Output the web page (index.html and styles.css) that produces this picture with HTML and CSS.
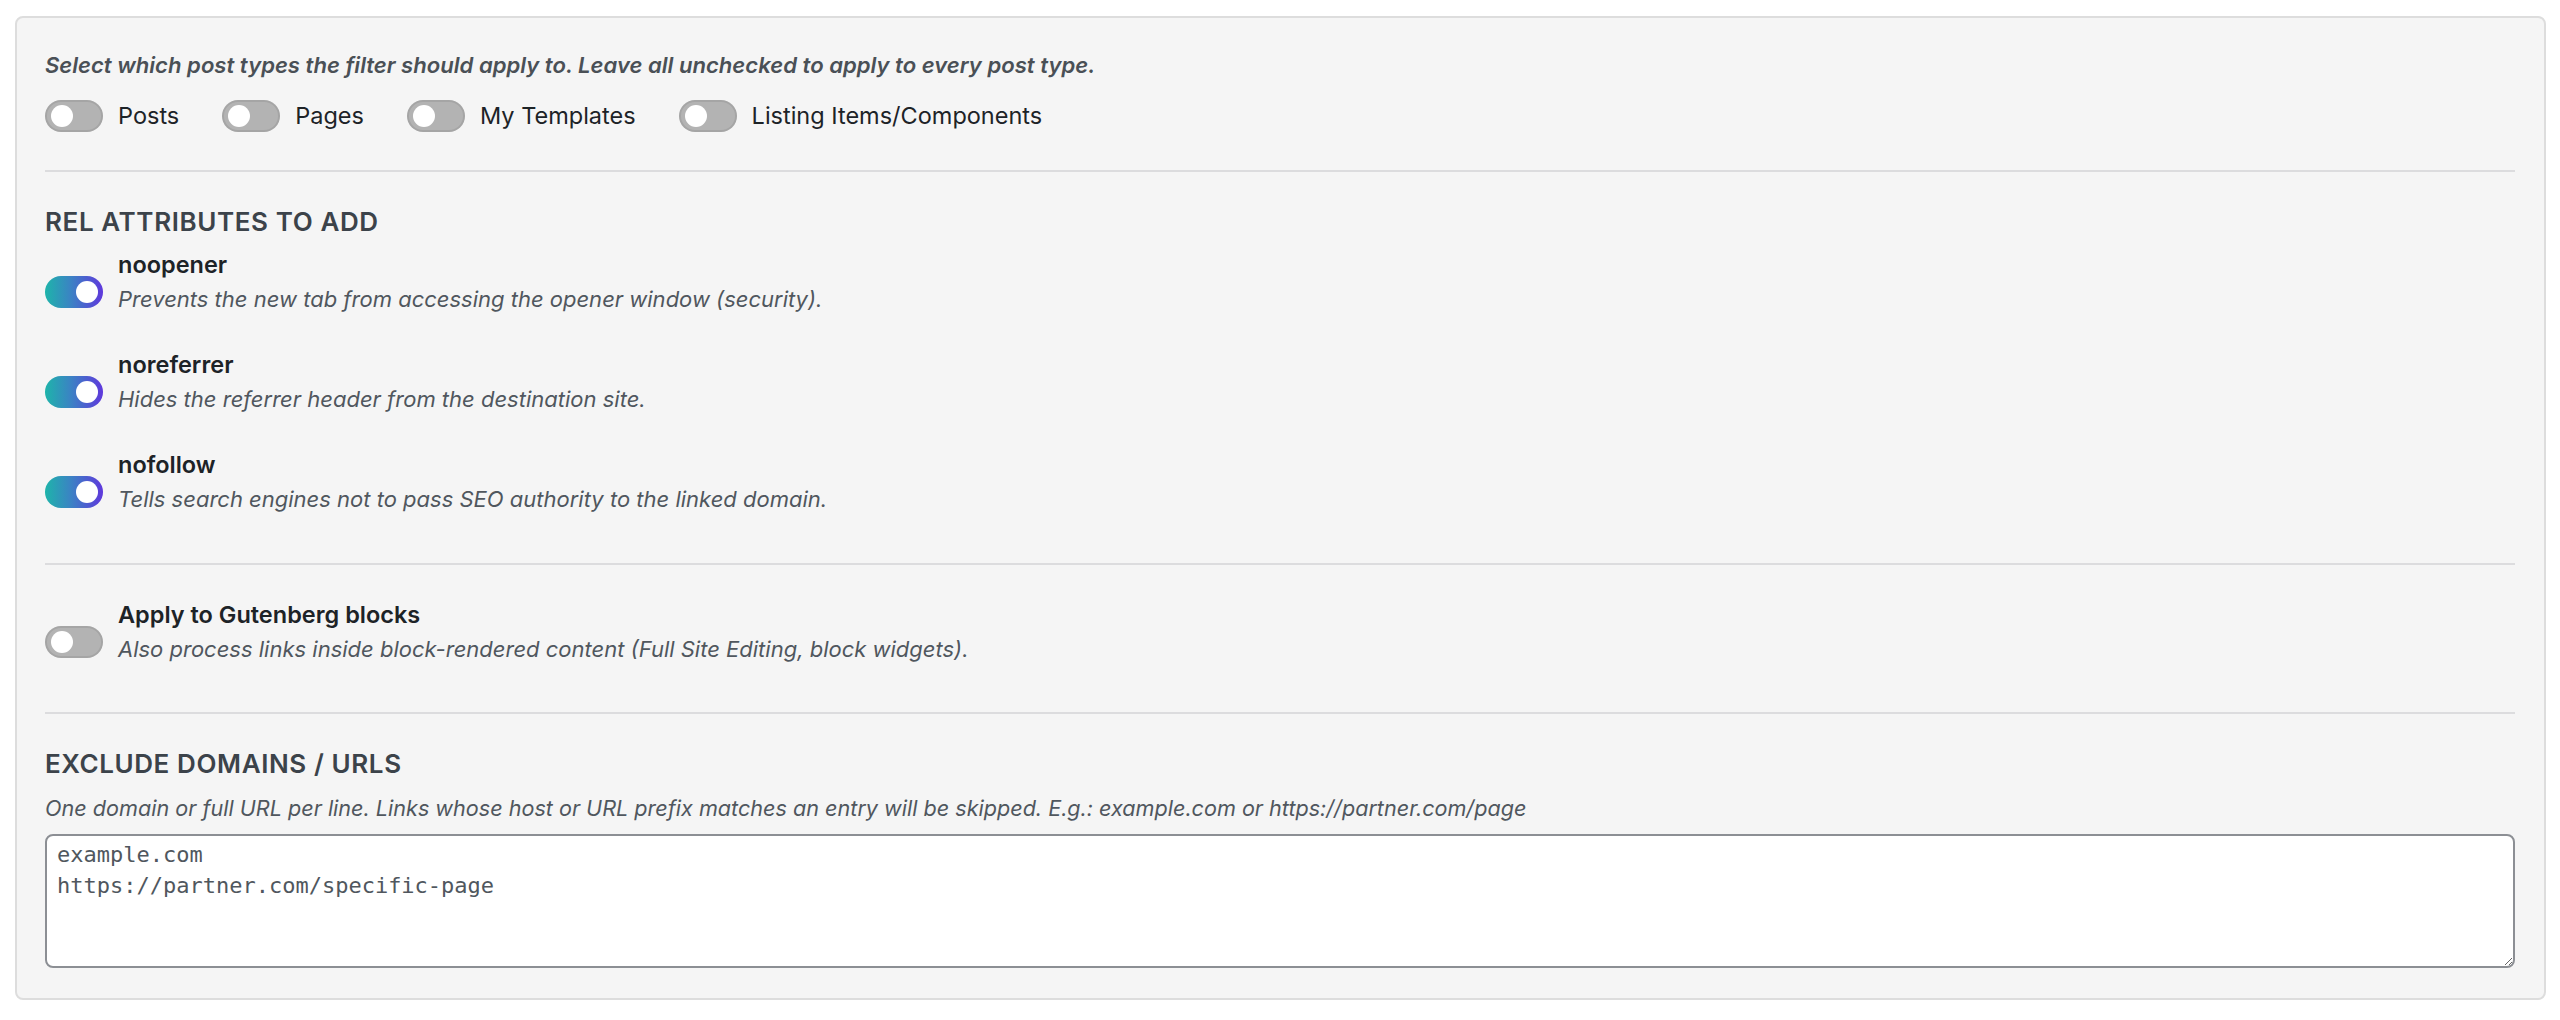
FILE: index.html
```html
<!DOCTYPE html>
<html lang="en">
<head>
<meta charset="utf-8">
<title>Link settings</title>
<link rel="stylesheet" href="styles.css">
</head>
<body>
<div class="panel">
  <section class="section first">
    <p class="desc lead">Select which post types the filter should apply to. Leave all unchecked to apply to every post type.</p>
    <div class="types">
      <label class="type"><span class="toggle"><span class="knob"></span></span><span class="type-label">Posts</span></label>
      <label class="type"><span class="toggle"><span class="knob"></span></span><span class="type-label">Pages</span></label>
      <label class="type"><span class="toggle"><span class="knob"></span></span><span class="type-label">My Templates</span></label>
      <label class="type"><span class="toggle"><span class="knob"></span></span><span class="type-label">Listing Items/Components</span></label>
    </div>
  </section>
  <hr class="sep">
  <section class="section">
    <h3 class="heading">REL ATTRIBUTES TO ADD</h3>
    <div class="opts">
      <div class="opt">
        <span class="toggle on"><span class="knob"></span></span>
        <div class="opt-text">
          <div class="opt-label">noopener</div>
          <div class="desc">Prevents the new tab from accessing the opener window (security).</div>
        </div>
      </div>
      <div class="opt">
        <span class="toggle on"><span class="knob"></span></span>
        <div class="opt-text">
          <div class="opt-label">noreferrer</div>
          <div class="desc">Hides the referrer header from the destination site.</div>
        </div>
      </div>
      <div class="opt">
        <span class="toggle on"><span class="knob"></span></span>
        <div class="opt-text">
          <div class="opt-label">nofollow</div>
          <div class="desc">Tells search engines not to pass SEO authority to the linked domain.</div>
        </div>
      </div>
    </div>
  </section>
  <hr class="sep sep2">
  <section class="section">
    <div class="opt single">
      <span class="toggle"><span class="knob"></span></span>
      <div class="opt-text">
        <div class="opt-label">Apply to Gutenberg blocks</div>
        <div class="desc">Also process links inside block-rendered content (Full Site Editing, block widgets).</div>
      </div>
    </div>
  </section>
  <hr class="sep sep3">
  <section class="section">
    <h3 class="heading">EXCLUDE DOMAINS / URLS</h3>
    <p class="desc exclude-desc">One domain or full URL per line. Links whose host or URL prefix matches an entry will be skipped. E.g.: example.com or https://partner.com/page</p>
    <textarea class="domains" spellcheck="false">example.com
https://partner.com/specific-page</textarea>
  </section>
</div>
</body>
</html>
```
FILE: styles.css
```css
html, body {
  margin: 0;
  padding: 0;
  background: #ffffff;
}
body {
  font-family: Inter, "Noto Sans", "Liberation Sans", sans-serif;
  color: #1d2327;
}
.panel {
  margin: 16px 14px 20px 15px;
  border: 2px solid #dddddd;
  border-radius: 8px;
  background: #f5f5f5;
  padding: 31px 29px 30px 28px;
  box-sizing: border-box;
  height: 984px;
}
.section {
  margin: 0;
}
.desc {
  margin: 0;
  font-size: 22px;
  line-height: 32px;
  font-style: italic;
  color: #50575e;
}
.lead {
  font-size: 22.1px;
  font-weight: 600;
  color: #4a5056;
}
.types {
  display: flex;
  align-items: center;
  gap: 43px;
  margin-top: 19px;
}
.type {
  display: flex;
  align-items: center;
  gap: 15px;
}
.type-label {
  font-size: 23.5px;
  line-height: 32px;
  color: #1d2327;
}
.toggle {
  position: relative;
  display: block;
  flex: none;
  width: 58px;
  height: 32px;
  border-radius: 16px;
  background: #b3b3b3;
  box-shadow: inset 0 0 0 2px rgba(0, 0, 0, 0.08);
}
.toggle .knob {
  position: absolute;
  top: 5px;
  left: 6px;
  width: 22px;
  height: 22px;
  border-radius: 50%;
  background: #ffffff;
}
.toggle.on {
  background: linear-gradient(90deg, #1eb4aa 0%, #3b82c4 45%, #5f38dc 100%);
  box-shadow: none;
}
.toggle.on .knob {
  left: 31px;
}
.sep {
  border: 0;
  height: 2px;
  background: #dcdcde;
  margin: 38px 0 0 0;
}
.sep2 {
  margin-top: 49px;
}
.sep3 {
  margin-top: 48px;
}
.heading {
  margin: 34px 0 0 0;
  font-size: 26px;
  line-height: 32px;
  font-weight: 600;
  letter-spacing: 0.6px;
  color: #3c434a;
}
.opts {
  display: flex;
  flex-direction: column;
  gap: 33px;
  margin-top: 9px;
}
.opt {
  display: flex;
  align-items: flex-start;
  gap: 15px;
}
.opt .toggle {
  margin-top: 29px;
}
.single {
  margin-top: 32px;
}
.opt-label {
  font-size: 23.5px;
  line-height: 35px;
  font-weight: 600;
  color: #1d2327;
}
.opt-text .desc {
  position: relative;
  top: 1px;
}
.exclude-desc {
  margin-top: 12px;
  font-size: 21.6px;
}
.domains {
  display: block;
  box-sizing: border-box;
  width: 100%;
  height: 134px;
  margin-top: 10px;
  padding: 3px 10px;
  border: 2px solid #8c8f94;
  border-radius: 8px;
  background: #ffffff;
  font-family: "DejaVu Sans Mono", "Liberation Mono", monospace;
  font-size: 22px;
  line-height: 31px;
  color: #50575e;
  resize: vertical;
  outline: none;
}
```
